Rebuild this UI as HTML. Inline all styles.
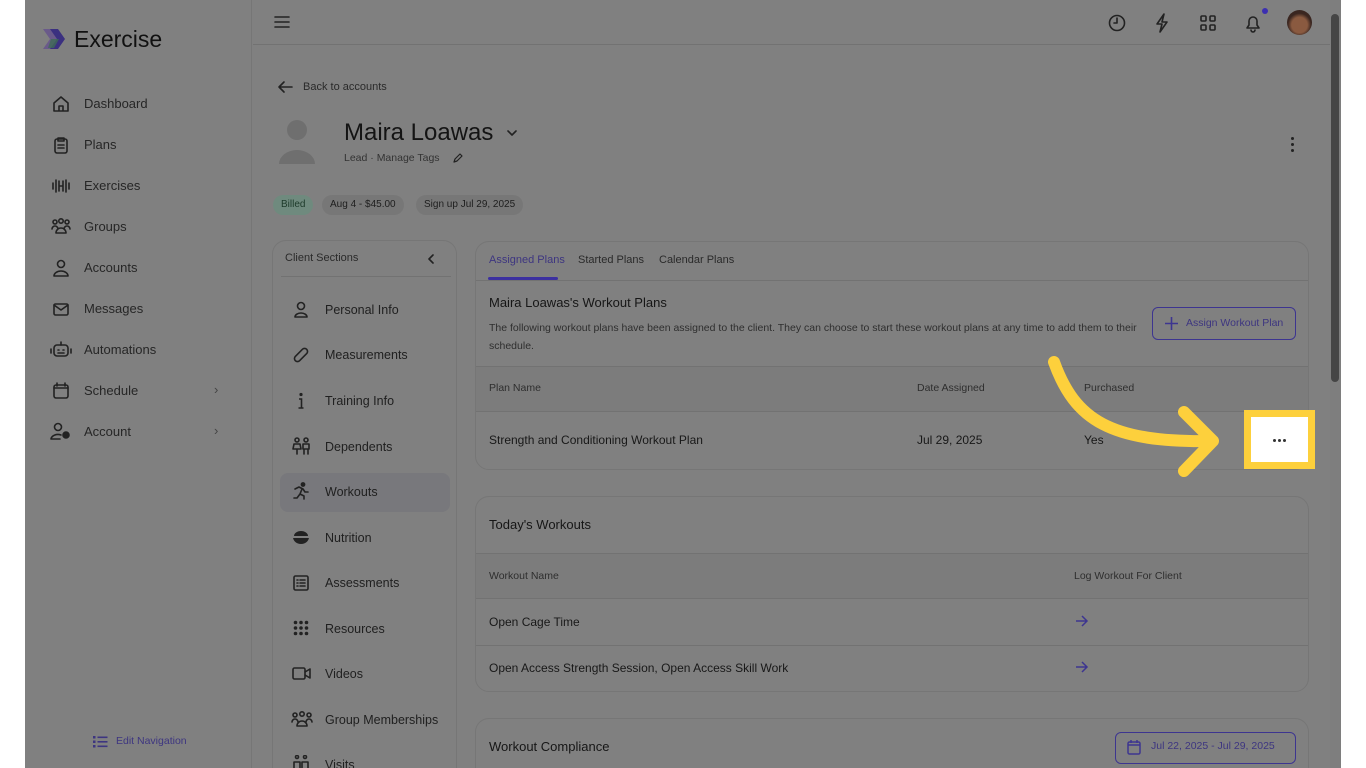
<!DOCTYPE html>
<html><head><meta charset="utf-8"><style>
*{box-sizing:border-box;margin:0;padding:0}
body{width:1366px;height:768px;overflow:hidden;background:#fff;font-family:"Liberation Sans",sans-serif;color:#1e1e1e;position:relative}
.a{position:absolute}
#app{left:25px;top:0;width:1316px;height:768px;background:#808080;overflow:hidden}
.t{position:absolute;white-space:nowrap}
.nav{font-size:13px;color:#262626}
.ic{position:absolute;fill:none;stroke:#222;stroke-width:1.6;stroke-linecap:round;stroke-linejoin:round}
.card{position:absolute;border:1px solid #767676;border-radius:14px;background:#808080}
.hl{position:absolute;height:1px;background:#727272}
.pill{position:absolute;height:20px;border-radius:10px;background:#777;font-size:10px;line-height:20px;padding:0 8px;color:#1e1e1e}
.sec{font-size:12.5px;color:#202020}
</style></head><body>
<div id="app" class="a">
 <div class="a" style="left:0;top:0;width:227px;height:768px;background:#808080;border-right:1px solid #767676"></div>
 <svg class="a" style="left:15px;top:26px" width="26" height="26" viewBox="0 0 26 26"><path d="M3 3h8l7 10-7 10H3l7-10z" fill="#6a5a8a"/><path d="M10 3h8l7 10-7 10h-8l7-10z" fill="#3b3080"/><path d="M11 13h8l-5 9h-6z" fill="#3f6a55" opacity=".8"/></svg>
 <div class="t" style="left:49px;top:26px;font-size:23px;color:#111">Exercise</div>
 <svg class="ic" style="left:27px;top:95px" width="18" height="18"><path d="M2 8l7-6 7 6v8H2z M7 16v-5h4v5"/></svg>
 <div class="t nav" style="left:59px;top:96px">Dashboard</div>
 <svg class="ic" style="left:27px;top:136px" width="18" height="18"><rect x="3" y="3" width="12" height="14" rx="2"/><path d="M6 2h6v3H6z M6 9h6 M6 12h6"/></svg>
 <div class="t nav" style="left:59px;top:137px">Plans</div>
 <svg class="ic" style="left:26px;top:177px" width="20" height="18"><path d="M2 6v6 M5 3v12 M8 4v10 M12 4v10 M15 3v12 M18 6v6 M8 9h4"/></svg>
 <div class="t nav" style="left:59px;top:178px">Exercises</div>
 <svg class="ic" style="left:26px;top:217px" width="20" height="18"><circle cx="4" cy="5" r="2"/><circle cx="10" cy="4" r="2.2"/><circle cx="16" cy="5" r="2"/><path d="M1 12a3 3 0 0 1 6 0 M13 12a3 3 0 0 1 6 0 M5 16a5 5 0 0 1 10 0z"/></svg>
 <div class="t nav" style="left:59px;top:219px">Groups</div>
 <svg class="ic" style="left:27px;top:259px" width="18" height="18"><circle cx="9" cy="5" r="3.5"/><path d="M2 17a7 5 0 0 1 14 0z"/></svg>
 <div class="t nav" style="left:59px;top:260px">Accounts</div>
 <svg class="ic" style="left:27px;top:300px" width="18" height="18"><rect x="2" y="4" width="14" height="11" rx="1.5"/><path d="M2 5l7 5 7-5"/></svg>
 <div class="t nav" style="left:59px;top:301px">Messages</div>
 <svg class="ic" style="left:25px;top:340px" width="22" height="18"><rect x="4" y="5" width="14" height="11" rx="3"/><path d="M11 2v3 M1 9v4 M21 9v4 M8 10h1 M13 10h1 M8 13h6"/></svg>
 <div class="t nav" style="left:59px;top:342px">Automations</div>
 <svg class="ic" style="left:27px;top:381px" width="18" height="18"><rect x="2" y="4" width="14" height="13" rx="2"/><path d="M5 2v3 M13 2v3 M2 7h14"/></svg>
 <div class="t nav" style="left:59px;top:383px">Schedule</div>
 <div class="t" style="left:189px;top:382px;font-size:13px;color:#444">›</div>
 <svg class="ic" style="left:25px;top:422px" width="22" height="18"><circle cx="8" cy="5" r="3.5"/><path d="M1 17a7 5 0 0 1 10-4 M1 17h9"/><circle cx="16" cy="13" r="3" fill="#222"/></svg>
 <div class="t nav" style="left:59px;top:424px">Account</div>
 <div class="t" style="left:189px;top:423px;font-size:13px;color:#444">›</div>
 <svg class="a" style="left:68px;top:735px" width="15" height="13"><g fill="#3d3580"><rect x="0" y="1" width="2.5" height="2.5"/><rect x="0" y="5.5" width="2.5" height="2.5"/><rect x="0" y="10" width="2.5" height="2.5"/><rect x="4.5" y="1.5" width="10" height="1.6"/><rect x="4.5" y="6" width="10" height="1.6"/><rect x="4.5" y="10.5" width="10" height="1.6"/></g></svg>
 <div class="t" style="left:91px;top:735px;font-size:10.5px;color:#3d3580">Edit Navigation</div>

 <div class="hl" style="left:228px;top:44px;width:1077px"></div>
 <svg class="ic" style="left:249px;top:14px" width="16" height="16"><path d="M1 3h14 M1 8h14 M1 13h14"/></svg>
 <svg class="ic" style="left:1083px;top:14px" width="18" height="18"><circle cx="9" cy="9" r="7.5"/><path d="M9 4v5H6"/></svg>
 <svg class="ic" style="left:1129px;top:13px" width="16" height="20"><path d="M10 1L3 11h5l-2 8 7-10H8z"/></svg>
 <svg class="ic" style="left:1174px;top:14px" width="18" height="18"><rect x="2" y="2" width="5" height="5" rx="1"/><rect x="11" y="2" width="5" height="5" rx="1"/><rect x="2" y="11" width="5" height="5" rx="1"/><rect x="11" y="11" width="5" height="5" rx="1"/></svg>
 <svg class="ic" style="left:1219px;top:13px" width="18" height="20"><path d="M3 15h12l-2-3V8a4 4 0 0 0-8 0v4z M7 17a2 2 0 0 0 4 0"/></svg>
 <div class="a" style="left:1237px;top:8px;width:6px;height:6px;border-radius:50%;background:#3c2fb0"></div>
 <div class="a" style="left:1262px;top:10px;width:25px;height:25px;border-radius:50%;background:radial-gradient(circle at 50% 60%,#8a5a40 0 40%,#3a2620 60%)"></div>
 <div class="a" style="left:1305px;top:0;width:11px;height:768px;background:#7e7e7e"></div>
 <div class="a" style="left:1306px;top:14px;width:8px;height:368px;border-radius:4px;background:#454545"></div>

 <svg class="ic" style="left:252px;top:80px" width="16" height="14"><path d="M15 7H2 M7 2L2 7l5 5"/></svg>
 <div class="t" style="left:278px;top:81px;font-size:11px;color:#2a2a2a">Back to accounts</div>
 <svg class="a" style="left:253px;top:118px" width="38" height="48"><circle cx="19" cy="12" r="10" fill="#6f6f6f"/><path d="M1 46a18 14 0 0 1 36 0z" fill="#6f6f6f"/></svg>
 <div class="t" style="left:319px;top:119px;font-size:24px;color:#141414">Maira Loawas</div>
 <svg class="ic" style="left:481px;top:128px" width="12" height="10"><path d="M2 3l4 4 4-4"/></svg>
 <div class="t" style="left:319px;top:152px;font-size:10.5px;color:#333">Lead · Manage Tags</div>
 <svg class="ic" style="left:427px;top:152px;stroke-width:1.2" width="12" height="12"><path d="M2 10l1-3 5-5 2 2-5 5z"/></svg>
 <div class="a" style="left:1266px;top:137px;width:3px;height:3px;border-radius:50%;background:#222;box-shadow:0 6px #222,0 12px #222"></div>
 <div class="pill" style="left:248px;top:195px;background:#6f8a7e;color:#1d3a2a">Billed</div>
 <div class="pill" style="left:297px;top:195px">Aug 4 - $45.00</div>
 <div class="pill" style="left:391px;top:195px">Sign up Jul 29, 2025</div>

 <div class="card" style="left:247px;top:240px;width:185px;height:560px"></div>
 <div class="t" style="left:260px;top:252px;font-size:11px;color:#2a2a2a">Client Sections</div>
 <svg class="ic" style="left:401px;top:253px" width="10" height="12"><path d="M7 2L3 6l4 4"/></svg>
 <div class="hl" style="left:256px;top:276px;width:170px"></div>
 <div class="a" style="left:255px;top:473px;width:170px;height:39px;border-radius:8px;background:#78787c"></div>
 <svg class="ic" style="left:267px;top:301px" width="18" height="18"><circle cx="9" cy="5" r="3.5"/><path d="M3 16a6 4 0 0 1 12 0z"/></svg>
 <div class="t sec" style="left:300px;top:303px">Personal Info</div>
 <svg class="ic" style="left:267px;top:346px" width="18" height="18"><rect x="1" y="6" width="16" height="6" rx="3" transform="rotate(-45 9 9)"/></svg>
 <div class="t sec" style="left:300px;top:348px">Measurements</div>
 <svg class="a" style="left:271px;top:392px" width="10" height="18"><circle cx="5" cy="2.5" r="1.6" fill="#222"/><path d="M3 7h2.5v9 M2.5 16h5" stroke="#222" stroke-width="1.6" fill="none"/></svg>
 <div class="t sec" style="left:300px;top:394px">Training Info</div>
 <svg class="ic" style="left:267px;top:437px" width="20" height="18"><circle cx="5" cy="3" r="2"/><circle cx="14" cy="3" r="2"/><path d="M2 7h6l1 5H1z M5 12v5 M11 7h6v5h-6z M12 12v5 M16 12v5"/></svg>
 <div class="t sec" style="left:300px;top:440px">Dependents</div>
 <svg class="ic" style="left:267px;top:482px" width="18" height="18"><circle cx="11" cy="2.5" r="1.6" fill="#222"/><path d="M3 7l4-2 4 2 2 3 3 0 M10 7l-2 5 4 2 0 3 M8 12l-3 4H2"/></svg>
 <div class="t sec" style="left:300px;top:485px">Workouts</div>
 <svg class="a" style="left:267px;top:529px" width="18" height="16"><path d="M1 8h16a8 7 0 0 1-16 0z" fill="#222"/><path d="M2 7a7 5 0 0 1 14 0z" fill="#222"/><rect x="1" y="7" width="16" height="2" fill="#808080"/></svg>
 <div class="t sec" style="left:300px;top:531px">Nutrition</div>
 <svg class="ic" style="left:267px;top:574px" width="18" height="18"><rect x="2" y="2" width="14" height="14" rx="1.5"/><path d="M5 6h1 M8 6h5 M5 9h1 M8 9h5 M5 12h1 M8 12h5"/></svg>
 <div class="t sec" style="left:300px;top:576px">Assessments</div>
 <svg class="a" style="left:268px;top:620px" width="16" height="16"><g fill="#222"><circle cx="2.5" cy="2.5" r="1.8"/><circle cx="8" cy="2.5" r="1.8"/><circle cx="13.5" cy="2.5" r="1.8"/><circle cx="2.5" cy="8" r="1.8"/><circle cx="8" cy="8" r="1.8"/><circle cx="13.5" cy="8" r="1.8"/><circle cx="2.5" cy="13.5" r="1.8"/><circle cx="8" cy="13.5" r="1.8"/><circle cx="13.5" cy="13.5" r="1.8"/></g></svg>
 <div class="t sec" style="left:300px;top:622px">Resources</div>
 <svg class="ic" style="left:267px;top:666px" width="20" height="16"><rect x="1" y="2" width="12" height="11" rx="1.5"/><path d="M13 6l5-3v9l-5-3"/></svg>
 <div class="t sec" style="left:300px;top:667px">Videos</div>
 <svg class="ic" style="left:266px;top:710px" width="22" height="18"><circle cx="4" cy="5" r="2"/><circle cx="11" cy="4" r="2.2"/><circle cx="18" cy="5" r="2"/><path d="M1 12a3 3 0 0 1 6 0 M15 12a3 3 0 0 1 6 0 M6 16a5 5 0 0 1 10 0z"/></svg>
 <div class="t sec" style="left:300px;top:713px">Group Memberships</div>
 <svg class="ic" style="left:267px;top:755px" width="18" height="14"><circle cx="5" cy="2" r="1.5"/><circle cx="13" cy="2" r="1.5"/><path d="M2 14V7h6v7 M10 14V7h6v7"/></svg>
 <div class="t sec" style="left:300px;top:758px">Visits</div>

 <div class="card" style="left:450px;top:241px;width:834px;height:229px"></div>
 <div class="t" style="left:464px;top:254px;font-size:11px;color:#3d3580">Assigned Plans</div>
 <div class="a" style="left:463px;top:277px;width:70px;height:3px;border-radius:2px;background:#3c30a0"></div>
 <div class="t" style="left:553px;top:254px;font-size:11px;color:#2a2a2a">Started Plans</div>
 <div class="t" style="left:634px;top:254px;font-size:11px;color:#2a2a2a">Calendar Plans</div>
 <div class="hl" style="left:451px;top:280px;width:832px"></div>
 <div class="t" style="left:464px;top:295px;font-size:13px;color:#161616">Maira Loawas's Workout Plans</div>
 <div class="t" style="left:464px;top:319px;font-size:10.5px;color:#2e2e2e;line-height:18px;white-space:normal;width:660px">The following workout plans have been assigned to the client. They can choose to start these workout plans at any time to add them to their schedule.</div>
 <div class="a" style="left:1127px;top:307px;width:144px;height:33px;border:1.5px solid #3d3590;border-radius:6px"></div>
 <svg class="a" style="left:1139px;top:316px" width="15" height="15"><path d="M7.5 1v13 M1 7.5h13" stroke="#3d3590" stroke-width="1.6"/></svg>
 <div class="t" style="left:1161px;top:317px;font-size:10.5px;color:#3d3580">Assign Workout Plan</div>
 <div class="hl" style="left:451px;top:366px;width:832px"></div>
 <div class="a" style="left:451px;top:367px;width:832px;height:44px;background:#7c7c7c"></div>
 <div class="t" style="left:464px;top:382px;font-size:10.5px;color:#2e2e2e">Plan Name</div>
 <div class="t" style="left:892px;top:382px;font-size:10.5px;color:#2e2e2e">Date Assigned</div>
 <div class="t" style="left:1059px;top:382px;font-size:10.5px;color:#2e2e2e">Purchased</div>
 <div class="hl" style="left:451px;top:411px;width:832px"></div>
 <div class="t" style="left:464px;top:433px;font-size:12px;color:#181818">Strength and Conditioning Workout Plan</div>
 <div class="t" style="left:892px;top:433px;font-size:12px;color:#181818">Jul 29, 2025</div>
 <div class="t" style="left:1059px;top:433px;font-size:12px;color:#181818">Yes</div>

 <div class="card" style="left:450px;top:496px;width:834px;height:196px"></div>
 <div class="t" style="left:464px;top:517px;font-size:13px;color:#161616">Today's Workouts</div>
 <div class="hl" style="left:451px;top:553px;width:832px"></div>
 <div class="a" style="left:451px;top:554px;width:832px;height:44px;background:#7c7c7c"></div>
 <div class="t" style="left:464px;top:570px;font-size:10.5px;color:#2e2e2e">Workout Name</div>
 <div class="t" style="left:1049px;top:570px;font-size:10.5px;color:#2e2e2e">Log Workout For Client</div>
 <div class="hl" style="left:451px;top:598px;width:832px"></div>
 <div class="t" style="left:464px;top:615px;font-size:12px;color:#181818">Open Cage Time</div>
 <svg class="a" style="left:1050px;top:615px" width="14" height="12"><path d="M1 6h11 M7 1l5 5-5 5" stroke="#3d3590" stroke-width="1.5" fill="none"/></svg>
 <div class="hl" style="left:451px;top:645px;width:832px"></div>
 <div class="t" style="left:464px;top:661px;font-size:12px;color:#181818">Open Access Strength Session, Open Access Skill Work</div>
 <svg class="a" style="left:1050px;top:661px" width="14" height="12"><path d="M1 6h11 M7 1l5 5-5 5" stroke="#3d3590" stroke-width="1.5" fill="none"/></svg>

 <div class="card" style="left:450px;top:718px;width:834px;height:80px"></div>
 <div class="t" style="left:464px;top:739px;font-size:13px;color:#161616">Workout Compliance</div>
 <div class="a" style="left:1090px;top:732px;width:181px;height:32px;border:1.5px solid #3d3590;border-radius:6px"></div>
 <svg class="a" style="left:1102px;top:739px" width="14" height="16"><rect x="1" y="3" width="12" height="12" rx="1.5" stroke="#3d3590" stroke-width="1.5" fill="none"/><path d="M4 1v3 M10 1v3 M1 6h12" stroke="#3d3590" stroke-width="1.5"/></svg>
 <div class="t" style="left:1126px;top:740px;font-size:10.5px;color:#3d3580">Jul 22, 2025 - Jul 29, 2025</div>
</div>

<div class="a" style="left:1244px;top:410px;width:71px;height:59px;background:#fdd03c"></div>
<div class="a" style="left:1251px;top:417px;width:57px;height:45px;background:#fff"></div>
<div class="a" style="left:1273px;top:439px;width:3px;height:3px;border-radius:50%;background:#333;box-shadow:5px 0 #333,10px 0 #333"></div>
<svg class="a" style="left:0;top:0" width="1366" height="768"><path d="M1054 362 C1075 420 1110 443 1213 441 M1184 412 L1213 441 L1184 471" stroke="#fdd03c" stroke-width="12" fill="none" stroke-linecap="round" stroke-linejoin="round"/></svg>
</body></html>
